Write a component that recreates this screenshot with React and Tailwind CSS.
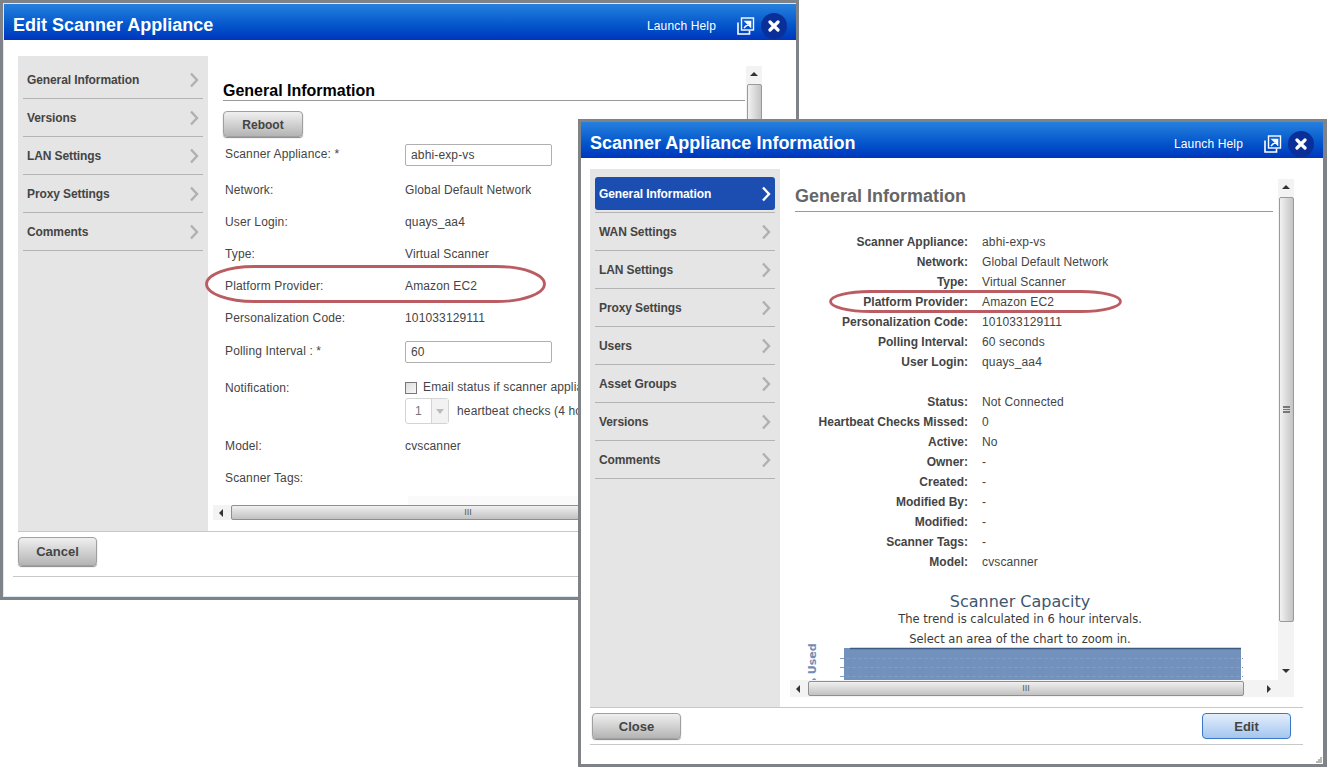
import React from 'react';

const win1Nav = ['General Information', 'Versions', 'LAN Settings', 'Proxy Settings', 'Comments'];
const win2Nav = ['General Information', 'WAN Settings', 'LAN Settings', 'Proxy Settings', 'Users', 'Asset Groups', 'Versions', 'Comments'];

const details = [
  ['Scanner Appliance:', 'abhi-exp-vs'],
  ['Network:', 'Global Default Network'],
  ['Type:', 'Virtual Scanner'],
  ['Platform Provider:', 'Amazon EC2'],
  ['Personalization Code:', '101033129111'],
  ['Polling Interval:', '60 seconds'],
  ['User Login:', 'quays_aa4'],
];

const status = [
  ['Status:', 'Not Connected'],
  ['Heartbeat Checks Missed:', '0'],
  ['Active:', 'No'],
  ['Owner:', '-'],
  ['Created:', '-'],
  ['Modified By:', '-'],
  ['Modified:', '-'],
  ['Scanner Tags:', '-'],
  ['Model:', 'cvscanner'],
];

const Chevron = ({ active }) => (
  <svg width="10" height="16" viewBox="0 0 10 16" className="shrink-0">
    <polyline points="2,1.5 8,8 2,14.5" fill="none" stroke={active ? '#ffffff' : '#b0b0b0'} strokeWidth="2.4" />
  </svg>
);

const Arrow = ({ dir }) => {
  const pts = {
    up: '0,5 4,1 8,5',
    down: '0,1 8,1 4,5',
    left: '5,0 5,8 1,4',
    right: '2,0 2,8 6,4',
  };
  return (
    <svg width="8" height="8" viewBox="0 0 8 8">
      <polygon points={pts[dir]} fill="#333333" />
    </svg>
  );
};

const SideNav = ({ items, activeFirst, className }) => (
  <div className={`w-[190px] shrink-0 bg-[#e5e5e5] px-[5px] ${className}`}>
    {items.map((item, i) => (
      <div key={item} className="h-[38px] border-b border-[#b4b4b4] py-[2px]">
        <div
          className={`flex h-[33px] items-center justify-between rounded-[3px] pl-[4px] pr-[4px] text-[12px] font-bold tracking-[-0.1px] ${
            activeFirst && i === 0 ? 'bg-[#1c4eb2] text-white' : 'text-[#444444]'
          }`}
        >
          <span>{item}</span>
          <Chevron active={activeFirst && i === 0} />
        </div>
      </div>
    ))}
  </div>
);

const Header = ({ title }) => (
  <div className="flex h-[36px] shrink-0 items-center justify-between bg-gradient-to-b from-[#2680de] to-[#0034bd] pl-[9px] pr-[9px] pt-[7px]">
    <div className="text-[18px] font-bold text-white">{title}</div>
    <div className="flex items-center">
      <span className="text-[12px] tracking-[0.15px] text-white">Launch Help</span>
      <svg width="18" height="18" viewBox="0 0 18 18" className="ml-[21px]">
        <rect x="4.5" y="1" width="12" height="12" fill="none" stroke="#ffffff" strokeWidth="1.4" />
        <path d="M1 5.5V17H12.5V13.5" fill="none" stroke="#ffffff" strokeWidth="1.6" />
        <path d="M7 11L12 6M8.5 4.5H13.5V9.5Z" fill="#ffffff" stroke="#ffffff" strokeWidth="1.6" />
      </svg>
      <div className="ml-[6px] flex h-[26px] w-[26px] items-center justify-center rounded-full bg-[#0a2f98]">
        <svg width="12" height="12" viewBox="0 0 12 12">
          <path d="M2 2L10 10M10 2L2 10" stroke="#ffffff" strokeWidth="3.2" strokeLinecap="round" />
        </svg>
      </div>
    </div>
  </div>
);

const VScroll = ({ thumbClass, grip }) => (
  <div className="flex w-[16px] shrink-0 flex-col items-center bg-[#f3f3f3]">
    <div className="flex h-[18px] shrink-0 items-center justify-center">
      <Arrow dir="up" />
    </div>
    <div className={`flex w-[15px] shrink-0 items-center justify-center rounded-[2px] border border-[#9a9a9a] bg-gradient-to-r from-[#f2f2f2] to-[#c4c4c4] ${thumbClass}`}>
      {grip && <div className="h-[7px] w-[7px] border-y-2 border-[#777777] after:block after:mt-[1px] after:h-px after:bg-[#777777]" />}
    </div>
    <div className="flex-1" />
    <div className="flex h-[16px] shrink-0 items-center justify-center">
      <Arrow dir="down" />
    </div>
  </div>
);

const HScroll = ({ thumbClass }) => (
  <div className="flex h-[15px] shrink-0 items-center bg-[#f3f3f3]">
    <div className="flex w-[18px] shrink-0 items-center justify-center">
      <Arrow dir="left" />
    </div>
    <div className={`flex h-[15px] shrink-0 items-center justify-center rounded-[2px] border border-[#8f8f8f] bg-gradient-to-b from-[#f0f0f0] to-[#c2c2c2] text-[9px] leading-none text-[#555555] ${thumbClass}`}>
      III
    </div>
    <div className="flex-1" />
    <div className="flex w-[18px] shrink-0 items-center justify-center">
      <Arrow dir="right" />
    </div>
  </div>
);

const Button = ({ children, className }) => (
  <div className={`flex items-center justify-center rounded-[4px] border border-[#a0a0a0] bg-gradient-to-b from-[#f0f0f0] to-[#b4b4b4] font-bold text-[#444444] shadow-[0_1px_1px_#888888] ${className}`}>
    {children}
  </div>
);

const FormRow = ({ label, children }) => (
  <div className="flex h-[32px] items-center pl-[2px]">
    <div className="w-[180px] shrink-0">{label}</div>
    <div>{children}</div>
  </div>
);

const EditWindow = () => (
  <div className="absolute left-0 top-0 flex h-[600px] w-[799px] flex-col border-[3px] border-[#7f8388] bg-white">
    <div className="flex h-full flex-col border border-r-0 border-[#dfe9f5] bg-white">
      <Header title="Edit Scanner Appliance" />
      <div className="flex pt-[16px]">
        <SideNav items={win1Nav} className="ml-[14px] h-[475px] pt-[5px]" />
        <div className="ml-[5px] mt-[10px] flex h-[454px] w-[549px] flex-col">
          <div className="flex min-h-0 flex-1">
            <div className="min-w-0 flex-1 overflow-hidden pl-[10px] pr-px text-[12px] tracking-[0.14px] text-[#444444]">
              <div className="mt-[14px] flex h-[21px] items-center border-b border-[#9a9a9a] pt-[1px] text-[16px] font-bold tracking-normal text-black">
                General Information
              </div>
              <Button className="mt-[10px] h-[26px] w-[80px] pt-[1px] text-[12px] tracking-normal">Reboot</Button>
              <div className="flex h-[37px] pl-[2px]">
                <div className="w-[180px] shrink-0 pt-[8px]">Scanner Appliance: *</div>
                <div className="pt-[7px]">
                  <div className="flex h-[22px] w-[147px] items-center rounded-[2px] border border-[#b0b0b0] pl-[5px]">abhi-exp-vs</div>
                </div>
              </div>
              <FormRow label="Network:">Global Default Network</FormRow>
              <FormRow label="User Login:">quays_aa4</FormRow>
              <FormRow label="Type:">Virtual Scanner</FormRow>
              <FormRow label="Platform Provider:">Amazon EC2</FormRow>
              <FormRow label="Personalization Code:">101033129111</FormRow>
              <div className="flex h-[38px] pl-[2px]">
                <div className="w-[180px] shrink-0 pt-[8px]">Polling Interval : *</div>
                <div className="pt-[7px]">
                  <div className="flex h-[22px] w-[147px] items-center rounded-[2px] border border-[#b0b0b0] pl-[5px]">60</div>
                </div>
              </div>
              <div className="flex h-[58px] pl-[2px]">
                <div className="w-[180px] shrink-0 pt-[7px]">Notification:</div>
                <div className="min-w-0 flex-1 whitespace-nowrap">
                  <div className="mt-[7px] flex h-[18px] items-center">
                    <div className="h-[12px] w-[12px] border border-[#777777] bg-gradient-to-br from-[#dddddd] to-[#f8f8f8]" />
                    <span className="ml-[6px] -translate-y-[1px]">Email status if scanner appliance</span>
                  </div>
                  <div className="mt-[1px] flex items-center">
                    <div className="flex h-[26px] w-[44px] rounded-[3px] border border-[#d4d4d4]">
                      <div className="flex flex-1 items-center justify-center text-[#777777]">1</div>
                      <div className="flex w-[17px] items-center justify-center border-l border-[#d4d4d4] bg-[#f2f2f2]">
                        <svg width="8" height="5" viewBox="0 0 8 5">
                          <polygon points="0,0 8,0 4,5" fill="#bbbbbb" />
                        </svg>
                      </div>
                    </div>
                    <span className="ml-[8px]">heartbeat checks (4 hours)</span>
                  </div>
                </div>
              </div>
              <FormRow label="Model:">cvscanner</FormRow>
              <FormRow label="Scanner Tags:" />
              <div className="ml-[185px] mt-[2px] h-[9px] bg-[#fafafa]" />
            </div>
            <VScroll thumbClass="h-[300px]" />
          </div>
          <HScroll thumbClass="w-[474px]" />
        </div>
      </div>
      <div className="mx-[14px] border-t border-[#c8c8c8] pt-[5px]">
        <Button className="h-[29px] w-[79px] text-[13px]">Cancel</Button>
      </div>
      <div className="ml-[9px] mt-[10px] mr-[9px] border-t border-[#c8c8c8]" />
    </div>
  </div>
);

const DetailRow = ({ label, value }) => (
  <div className="flex h-[20px] items-center">
    <div className="w-[173px] shrink-0 text-right font-bold">{label}</div>
    <div className="ml-[14px] tracking-[0.14px]">{value}</div>
  </div>
);

const InfoWindow = () => (
  <div className="absolute left-[578px] top-[119px] flex h-[648px] w-[749px] flex-col border-y-[3px] border-l-[3px] border-r-[4px] border-[#7f8388] bg-white">
    <div className="relative flex h-full flex-col bg-white">
      <Header title="Scanner Appliance Information" />
      <div className="flex pt-[11px]">
        <SideNav items={win2Nav} activeFirst className="ml-[9px] h-[538px] pt-[6px]" />
        <div className="ml-[10px] mt-[10px] flex h-[518px] w-[504px] flex-col">
          <div className="flex min-h-0 flex-1">
            <div className="min-w-0 flex-1 overflow-hidden pl-[5px] pr-[5px] text-[12px] text-[#444444]">
              <div className="flex h-[33px] items-center border-b border-[#9a9a9a] pt-[2px] text-[18px] font-bold text-[#666666]">
                General Information
              </div>
              <div className="mt-[20px]">
                {details.map(([label, value]) => (
                  <DetailRow key={label} label={label} value={value} />
                ))}
              </div>
              <div className="mt-[20px]">
                {status.map(([label, value]) => (
                  <DetailRow key={label} label={label} value={value} />
                ))}
              </div>
              <div className="w-[450px] pt-[20px] text-center font-['DejaVu_Sans',sans-serif] text-[#3a3a3a]">
                <div className="text-[16px] leading-[19px] text-[#3e576f]">Scanner Capacity</div>
                <div className="text-[11.5px] leading-[16px]">The trend is calculated in 6 hour intervals.</div>
                <div className="mt-[4px] text-[11.5px] leading-[16px]">Select an area of the chart to zoom in.</div>
              </div>
              <svg width="472" height="50" viewBox="0 0 472 50" className="-mt-[6px] block">
                <text transform="translate(21,48) rotate(-90)" fontFamily="'DejaVu Sans', sans-serif" fontSize="11" fontWeight="bold" fill="#6f8db5">
                  % Used
                </text>
                <rect x="49" y="7" width="397" height="43" fill="#7292bd" />
                <line x1="55" y1="7.5" x2="446" y2="7.5" stroke="#3d5a80" strokeWidth="1.5" />
                <line x1="45" y1="17.5" x2="448" y2="17.5" stroke="#7f9cc4" strokeDasharray="4 2" />
                <line x1="45" y1="26.5" x2="448" y2="26.5" stroke="#7f9cc4" strokeDasharray="4 2" />
                <line x1="45" y1="35.5" x2="448" y2="35.5" stroke="#7f9cc4" strokeDasharray="4 2" />
              </svg>
            </div>
            <VScroll thumbClass="h-[425px]" grip />
          </div>
          <div className="h-[17px] shrink-0 bg-[#f3f3f3] pr-[16px] pt-px">
            <HScroll thumbClass="w-[436px]" />
          </div>
        </div>
      </div>
      <div className="ml-[9px] mr-[20px] flex items-start justify-between border-t border-[#c8c8c8] pl-[2px] pr-[12px] pt-[5px]">
        <Button className="h-[26px] w-[89px] pt-[1px] text-[13px]">Close</Button>
        <div className="flex h-[26px] w-[89px] items-center justify-center rounded-[4px] border border-[#3a77c4] bg-gradient-to-b from-[#e4eefb] to-[#a4c6ef] pt-[1px] text-[13px] font-bold text-[#444444]">
          Edit
        </div>
      </div>
      <div className="ml-[9px] mr-[20px] mt-[5px] border-t border-[#c8c8c8]" />
      <svg width="6" height="6" viewBox="0 0 6 6" className="absolute bottom-px right-px">
        <path d="M4 0h2v2H4zM2 2h2v2H2zM4 2h2v2H4zM0 4h2v2H0zM2 4h2v2H2zM4 4h2v2H4z" fill="#b8b8b8" />
      </svg>
    </div>
  </div>
);

const Highlight = ({ className, width, height, radius }) => (
  <svg width={width} height={height} viewBox={`0 0 ${width} ${height}`} className={`absolute ${className}`}>
    <rect x="1.5" y="1.5" width={width - 3} height={height - 3} rx={radius} ry={height / 2 - 1.5} fill="none" stroke="#bb5c63" strokeWidth="2.8" />
  </svg>
);

export default function App() {
  return (
    <div className="relative h-[767px] w-[1327px] overflow-hidden bg-white font-['Liberation_Sans',Arial,sans-serif]">
      <EditWindow />
      <Highlight className="left-[205px] top-[265px]" width={341} height={38} radius={48} />
      <InfoWindow />
      <Highlight className="left-[829px] top-[290px]" width={293} height={23} radius={40} />
    </div>
  );
}
